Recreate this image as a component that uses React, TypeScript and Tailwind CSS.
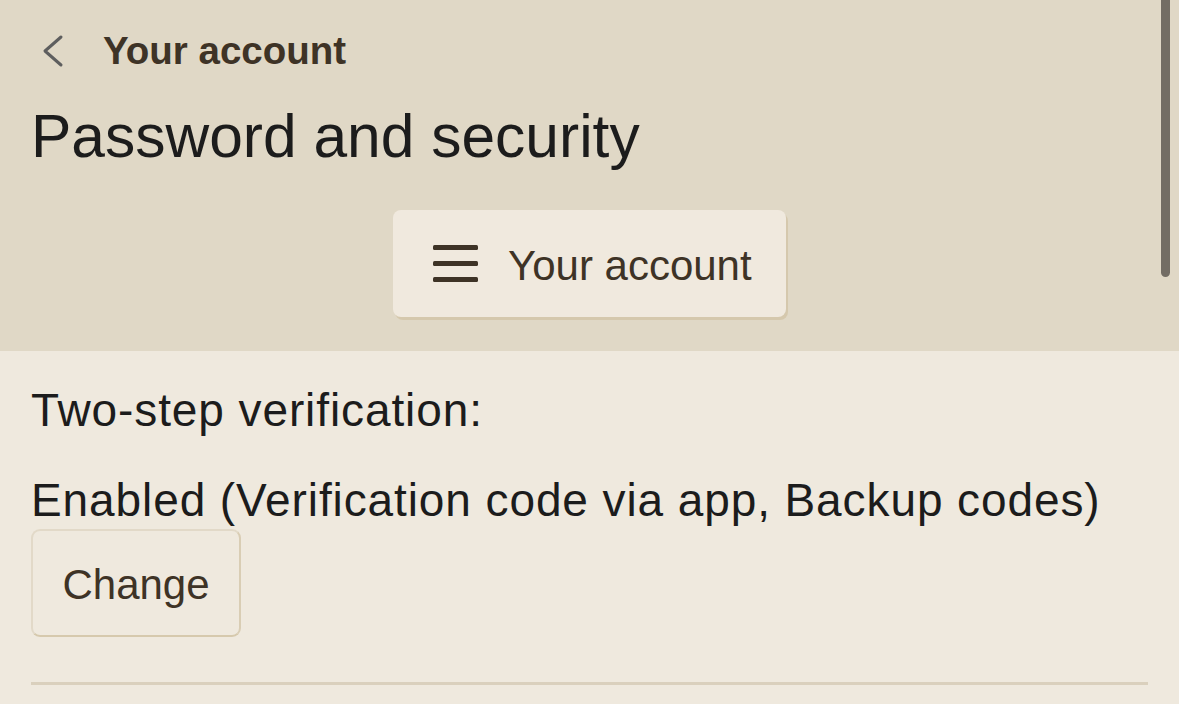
import React from 'react';

const font = { fontFamily: '"Liberation Sans", Arial, sans-serif' };

function ChevronLeft() {
  return (
    <svg width="22" height="34" viewBox="0 0 22 34" fill="none" className="shrink-0">
      <polyline
        points="19,3 3,17 19,31"
        stroke="#5e5e5e"
        strokeWidth="3"
        strokeLinecap="round"
        strokeLinejoin="round"
      />
    </svg>
  );
}

function MenuIcon() {
  return (
    <svg width="45" height="38" viewBox="0 0 45 38" className="shrink-0">
      <rect x="0" y="0" width="45" height="5" rx="1.5" fill="#3e3326" />
      <rect x="0" y="16" width="45" height="5" rx="1.5" fill="#3e3326" />
      <rect x="0" y="32" width="45" height="5" rx="1.5" fill="#3e3326" />
    </svg>
  );
}

export default function App() {
  return (
    <div className="relative min-h-[704px] w-full overflow-hidden bg-[#efe9de]" style={font}>
      {/* Header band */}
      <header className="flex flex-col bg-[#e0d8c6] pb-[34px]">
        <div className="flex items-center pl-[42px] pt-[29px]">
          <ChevronLeft />
          <span className="ml-[39px] text-[38.5px] leading-[44px] font-bold text-[#3e3326]">Your account</span>
        </div>
        <h1 className="mt-[28px] pl-[31px] text-[60.5px] leading-[70px] text-[#1c1c1c]">Password and security</h1>
        <div className="mt-[39px] flex justify-center">
          <button className="flex h-[107px] w-[393px] items-center gap-[30px] rounded-[8px] bg-[#f0e9de] pl-[40px] pr-[34px] shadow-[2px_3px_0_#d5c8ad]">
            <MenuIcon />
            <span className="pt-[4px] text-[42px] leading-[48px] text-[#3e3326]">Your account</span>
          </button>
        </div>
      </header>

      {/* Two-step verification */}
      <section className="flex flex-col px-[31px] pt-[32px]">
        <p className="text-[46px] leading-[54px] tracking-[0.9px] text-[#1c1c1c]">Two-step verification:</p>
        <p className="mt-[36px] text-[46px] leading-[54px] tracking-[0.9px] text-[#1c1c1c]">
          Enabled (Verification code via app, Backup codes)
        </p>
        <div className="mt-[2px] flex">
          <button className="flex h-[108px] w-[210px] items-center justify-center rounded-[9px] border-2 border-[#e2d9c8] border-b-[#d6c9ad] border-r-[#d9cdb4] bg-[#efe9de]">
            <span className="pt-[4px] text-[42px] leading-[48px] text-[#3e3326]">Change</span>
          </button>
        </div>
        <div className="mt-[45px] h-[3px] w-full bg-[#dad0bd]" />
      </section>

      {/* Scroll thumb */}
      <div className="absolute right-[9px] top-0 h-[277px] w-[9px] rounded-b-full bg-[#736d64]" />
    </div>
  );
}
